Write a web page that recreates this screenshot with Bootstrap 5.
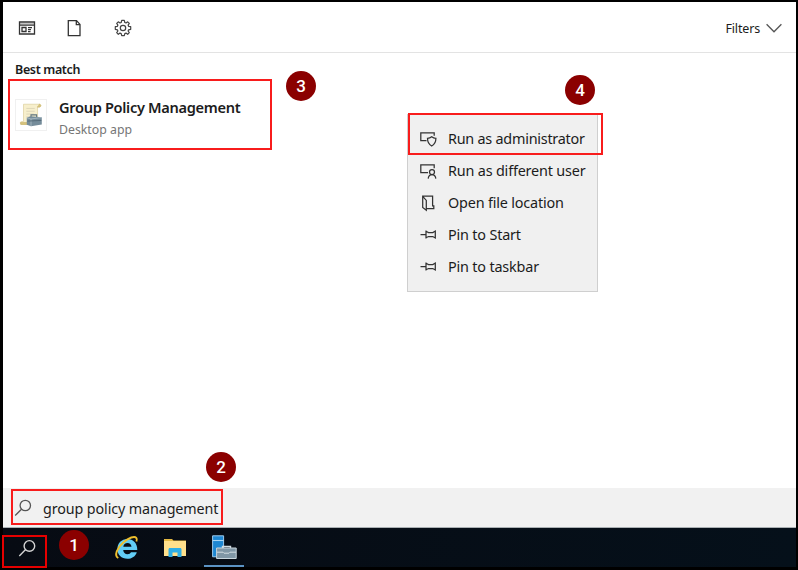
<!DOCTYPE html>
<html lang="en">
<head>
<meta charset="utf-8">
<meta name="viewport" content="width=device-width, initial-scale=1">
<title>Start menu search</title>
<link href="https://cdn.jsdelivr.net/npm/bootstrap@5.3.0/dist/css/bootstrap.min.css" rel="stylesheet">
<style>
body{font-family:"Noto Sans","Open Sans",sans-serif;color:#1c1c1c;background:#000;line-height:1}
svg{display:block;flex:none;overflow:visible}
.screen{width:798px;height:570px;border:solid #000;border-width:2px 2px 3px 3px;background:#fff}
.topbar{height:51px;border-bottom:1px solid #e3e3e3;padding:2px 14px 0 15px}
.file-icon{margin-left:31px}
.gear-icon{margin-left:33px}
.filters{font-size:12.5px;letter-spacing:-.15px;padding-top:2px}
.chevron{margin-left:6px}
.heading{font-size:12.5px;font-weight:600;letter-spacing:-.36px;padding:11px 0 0 12px}
.result{padding:22px 0 0 12px;gap:12px}
.thumb{width:32px;height:32px;border:1px solid #f0f0f0}
.result-title{font-size:14.6px;font-weight:600;line-height:20px;letter-spacing:-.32px;margin-top:-2px}
.result-kind{font-size:12.3px;color:#767676;line-height:18px;margin-top:4px}
.context{left:407px;top:114px;width:191px;height:178px;background:#f0f0f0;border:1px solid #cfcfcf;padding:8px 0 0 12px}
.context-item{height:32px;gap:11px;font-size:14.4px;letter-spacing:-.18px}
.context-item:first-child{letter-spacing:-.24px}
.searchbar{height:40px;background:#f1f1f1;border-bottom:1px solid #aab0b3;padding:0 0 0 11px;gap:11px;font-size:14.3px;letter-spacing:-.1px}
.query{padding-top:3px}
.taskbar{height:39px;background:linear-gradient(90deg,#070b13,#05101a)}
.task-search{margin-left:15px}
.task-ie{margin-left:79px}
.task-files{margin-left:25px}
.task-server{margin-left:26px}
.frame{border:2px solid #f81c1c}
.f-result{left:8px;top:79px;width:264px;height:71px}
.f-menu{left:408px;top:113px;width:195px;height:42px}
.f-search{left:11px;top:489px;width:212px;height:36px}
.f-task{left:2px;top:535px;width:45px;height:33px;border-color:#e60000}
.step{width:30px;height:30px;border-radius:50%;background:#8b0000;color:#fff;font:500 17px Roboto,sans-serif}
.s1{left:59px;top:530px}.s2{left:206px;top:452px}.s3{left:286px;top:71px}.s4{left:565px;top:75px}
.running{width:40px;height:2px;background:#5b93c4;left:204px;top:565px}
</style>
</head>
<body class="overflow-hidden">
<main class="screen d-flex flex-column position-relative">
<header class="topbar d-flex align-items-center">
<svg width="18" height="14" fill="none" stroke="#333" stroke-width="1.3"><path d="M2 2.800h14" stroke="#bbb"/><path d="M1.500 1h15v12h-15zM1.500 4.200h15M4 6.500h4v4H4zM10 6.600h4M10 8.600h3M10 10.600h2.500"/></svg>
<svg class="file-icon" width="14" height="18" fill="none" stroke="#333" stroke-width="1.3"><path d="M1.300 1.600h8.200l3.500 3.800v11.200H1.300zM9.300 1.600v4H13"/></svg>
<svg class="gear-icon" width="18" height="18" viewBox="-9 -9 18 18" fill="none" stroke="#444" stroke-width="1.2" stroke-linejoin="round"><path d="M-1.300-7.600H1.300L1.800-5.500 3-5 4.700-6.200 6.300-4.600 5.100-2.900 5.600-1.700 7.700-1.300V1.300L5.600 1.800 5.100 3 6.300 4.700 4.700 6.300 3 5.100 1.800 5.600 1.300 7.700H-1.300L-1.800 5.600-3 5.100-4.700 6.300-6.300 4.700-5.100 3-5.600 1.800-7.700 1.300V-1.300L-5.600-1.700-5.100-2.900-6.300-4.600-4.700-6.200-3-5-1.800-5.500z"/><circle r="2.700"/></svg>
<span class="filters ms-auto">Filters</span>
<svg class="chevron" width="16" height="10" fill="none" stroke="#555" stroke-width="1.3"><path d="M.6 1.200 8 8.700l7.400-7.500"/></svg>
</header>
<section class="flex-grow-1">
<div class="heading">Best match</div>
<div class="result d-flex">
<svg class="thumb" viewBox="0 0 32 32"><path d="M8 4.500h17c2 0 2 3 0 3h-2V26H6c-2 0-2-3 0-3h2z" fill="#f7efcc" stroke="#dfd2a2" stroke-width=".8"/><path d="M24.500 4.500c2.500 0 2.500 3 0 3h-2M5 26h15v-2H5z" fill="#d9c57c" stroke="#c5af67" stroke-width=".6"/><path d="M11 9h9M11 12h9M11 15h8M11 18h4" stroke="#ddd5b8"/><path d="M16 18v-2.200h6V18" fill="none" stroke="#5f747f" stroke-width="1.2"/><path d="m11.500 19 4-1.800 12 1.200v7.600L16 28l-4.500-1.500z" fill="#758c9a"/><path d="m11.500 19 4.500 1.200 11.500-1.500M16 20v8" stroke="#b2c2ca" stroke-width=".8" fill="none"/><path d="m12 22.500 15-.7" stroke="#536a78"/></svg>
<div><div class="result-title">Group Policy Management</div><div class="result-kind">Desktop app</div></div>
</div>
</section>
<div class="searchbar d-flex align-items-center">
<svg width="18" height="18" fill="none" stroke="#555" stroke-width="1.3"><circle cx="11.300" cy="6.500" r="5.200"/><path d="m7.500 10.200-6.300 6.300"/></svg>
<span class="query">group policy management</span>
</div>
<footer class="taskbar d-flex align-items-center">
<svg class="task-search" width="18" height="18" fill="none" stroke="#d5d5d5" stroke-width="1.4"><circle cx="11.400" cy="6.900" r="5.300"/><path d="m7.600 10.600-6.300 6.400"/></svg>
<svg class="task-ie" width="24" height="24" viewBox="0 0 24 24"><path fill="#62cdf5" fill-rule="evenodd" d="M22.300 14H8.200c.2 2.600 1.900 4.200 4.300 4.200 1.700 0 2.800-.7 3.500-2h5.800c-1.300 4.200-4.900 6.600-9.400 6.600-6 0-10-4-10-9.800S6.600 3 12.400 3s10 4.200 9.900 11zM8.300 10.700h8.200c-.2-2.300-1.700-3.700-4-3.700s-3.900 1.400-4.200 3.700z"/><path d="M3.300 22C-1.200 19.500 2 12 8.500 6.200 14 1.500 19.500-.2 21.300 1.800c.8 1 .6 2.500.1 3.700" fill="none" stroke="#efbf2d" stroke-width="1.900"/></svg>
<svg class="task-files" width="22" height="20" viewBox="0 0 22 20"><path d="M0 2.500V1h8l1.500 1.500H22V18H0z" fill="#e4b842"/><path d="M0 3h22v15H0z" fill="#ffe08b"/><path d="M4.500 19v-7.500c0-.8.5-1.500 1.500-1.500h10c1 0 1.500.7 1.500 1.500V19h-4v-4.500h-5V19z" fill="#2eaee6"/></svg>
<svg class="task-server" width="25" height="25" viewBox="0 0 25 25"><path d="M.6.8h11v21H.6z" fill="#1e87d2" stroke="#9ccaed"/><path d="M.8 5.500h10.800" stroke="#a7d6f4" stroke-width="1.1"/><path d="M10.500 13v-1.500h8V13" fill="none" stroke="#d1dce2" stroke-width="1.4"/><path d="M4.600 13h19.600v10.500H4.600z" fill="#8097a6" stroke="#c8d6de"/><path d="M5 17.200h6l1 1h5l1-1h6" fill="none" stroke="#d1dce2"/></svg>
</footer>
</main>
<div class="context position-absolute">
<div class="context-item d-flex align-items-center"><svg width="17" height="16" fill="none" stroke="#333" stroke-width="1.250"><path d="M6.500 9.500H.8V1.800h13.400v3"/><path d="M11.700 5.800c1.200 1 2.500 1.500 4.200 1.500 0 4.300-.9 6-4.200 7.700-3.300-1.700-4.200-3.400-4.200-7.700 1.700 0 3-.5 4.200-1.500z"/></svg><span>Run as administrator</span></div>
<div class="context-item d-flex align-items-center"><svg width="17" height="16" fill="none" stroke="#333" stroke-width="1.250"><path d="M8 9.500H.8V1.800h13.400v3.500"/><circle cx="12" cy="9" r="2.500"/><path d="M8.200 15.600c.2-2.800 1.500-4.100 3.800-4.100s3.600 1.300 3.800 4.100"/></svg><span>Run as different user</span></div>
<div class="context-item d-flex align-items-center"><svg width="17" height="16" fill="none" stroke="#333" stroke-width="1.250"><path d="M6.500 13.500h7.300v-2.700h-1.200V1.200H2.700v11.300l3.600 2.700V5.400L2.700 1.400"/></svg><span>Open file location</span></div>
<div class="context-item d-flex align-items-center"><svg width="17" height="16" fill="none" stroke="#333" stroke-width="1.250"><path d="M.5 7.500h5M6 3.500v8M6 4.300l2.500 1.200h4.300L15.300 4v7l-2.500-1.500H8.500L6 10.700"/></svg><span>Pin to Start</span></div>
<div class="context-item d-flex align-items-center"><svg width="17" height="16" fill="none" stroke="#333" stroke-width="1.250"><path d="M.5 7.500h5M6 3.500v8M6 4.300l2.500 1.200h4.300L15.300 4v7l-2.500-1.500H8.500L6 10.700"/></svg><span>Pin to taskbar</span></div>
</div>
<div class="frame f-result position-absolute"></div>
<div class="frame f-menu position-absolute"></div>
<div class="frame f-search position-absolute"></div>
<div class="frame f-task position-absolute"></div>
<div class="running position-absolute"></div>
<div class="step s1 position-absolute d-flex align-items-center justify-content-center">1</div>
<div class="step s2 position-absolute d-flex align-items-center justify-content-center">2</div>
<div class="step s3 position-absolute d-flex align-items-center justify-content-center">3</div>
<div class="step s4 position-absolute d-flex align-items-center justify-content-center">4</div>
<script src="https://cdn.jsdelivr.net/npm/bootstrap@5.3.0/dist/js/bootstrap.bundle.min.js"></script>
</body>
</html>
